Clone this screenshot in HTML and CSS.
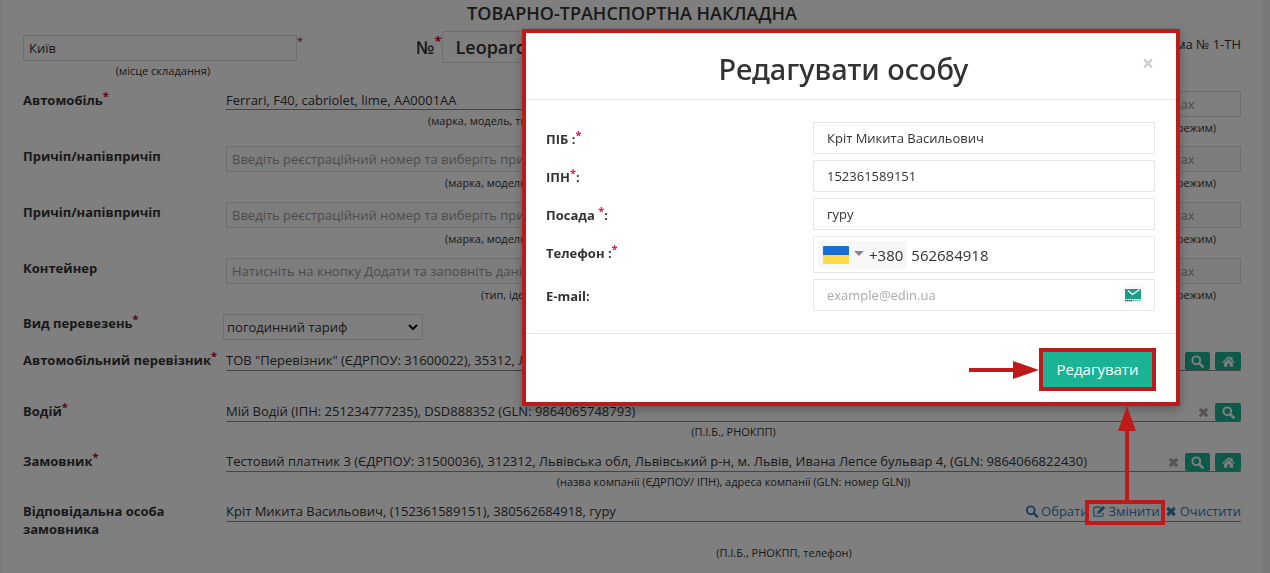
FILE: index.html
```html
<!DOCTYPE html>
<html lang="uk">
<head>
<meta charset="utf-8">
<title>Товарно-транспортна накладна</title>
<link rel="stylesheet" href="styles.css">
</head>
<body>
<svg class="sprite" aria-hidden="true">
  <symbol id="search" viewBox="0 0 16 16"><circle cx="6.5" cy="6.5" r="4.8" fill="none" stroke="currentColor" stroke-width="2.4"/><path d="M10.2 10.2l4.2 4.2" stroke="currentColor" stroke-width="3" stroke-linecap="round"/></symbol>
  <symbol id="home" viewBox="0 0 16 16"><path d="M8 1.6l2.8 2.5V2.4h2.2v3.7L16 8.8l-1 1.1L8 3.9 1 9.900 0 8.800z" fill="currentColor"/><path d="M8 5l5.500 4.700V14.500H9.500v-4h-3v4h-4V9.700z" fill="currentColor"/></symbol>
  <symbol id="times" viewBox="0 0 16 16"><path d="M3.500 3.500l9 9M12.500 3.500l-9 9" stroke="currentColor" stroke-width="4"/></symbol>
  <symbol id="edit" viewBox="0 0 16 16"><path d="M10.500 2.600H3.600A2 2 0 0 0 1.600 4.600v7.300a2 2 0 0 0 2 2h7.400a2 2 0 0 0 2-2V9.500" fill="none" stroke="currentColor" stroke-width="1.300"/><path d="M6 8.200l7-7 2.600 2.600-7 7H6z" fill="currentColor"/><path d="M7.200 8.600l1.100 1.100" stroke="#fff" stroke-width="1"/></symbol>
</svg>

<main class="page">
  <h1 class="title">ТОВАРНО-ТРАНСПОРТНА НАКЛАДНА</h1>

  <div class="head">
    <div class="place">
      <div class="place-line"><input class="input" id="city" value="Київ"><sup class="req thin">*</sup></div>
      <label class="hint" for="city">(місце складання)</label>
    </div>
    <div class="number"><label for="num">№<sup class="req">*</sup></label><input class="input big" id="num" value="Leopard"></div>
    <div class="form-name">Форма № 1-ТН</div>
  </div>

  <div class="row first">
    <div class="label">Автомобіль<sup class="req">*</sup></div>
    <div class="main">
      <div class="value">Ferrari, F40, cabriolet, lime, AA0001AA</div>
      <div class="hint hint-car">(марка, модель, тип, реєстраційний номер)</div>
    </div>
    <div class="side"><input class="input" aria-label="Режим" placeholder="Температура у градусах"><div class="hint">(температурний режим)</div></div>
  </div>
  <div class="row boxed">
    <label class="label" for="trailer1">Причіп/напівпричіп</label>
    <div class="main">
      <input class="input off" id="trailer1" placeholder="Введіть реєстраційний номер та виберіть причіп">
      <div class="hint hint-trailer">(марка, модель, тип, номер)</div>
    </div>
    <div class="side"><input class="input off" aria-label="Режим" placeholder="Температура у градусах"><div class="hint">(температурний режим)</div></div>
  </div>
  <div class="row boxed">
    <label class="label" for="trailer2">Причіп/напівпричіп</label>
    <div class="main">
      <input class="input off" id="trailer2" placeholder="Введіть реєстраційний номер та виберіть причіп">
      <div class="hint hint-trailer">(марка, модель, тип, номер)</div>
    </div>
    <div class="side"><input class="input off" aria-label="Режим" placeholder="Температура у градусах"><div class="hint">(температурний режим)</div></div>
  </div>
  <div class="row boxed">
    <label class="label" for="box">Контейнер</label>
    <div class="main">
      <input class="input off" id="box" placeholder="Натисніть на кнопку Додати та заповніть дані">
      <div class="hint hint-box">(тип, ідентифікаційний номер)</div>
    </div>
    <div class="side"><input class="input off" aria-label="Режим" placeholder="Температура у градусах"><div class="hint">(температурний режим)</div></div>
  </div>
  <div class="row short">
    <label class="label" for="kind">Вид перевезень<sup class="req">*</sup></label>
    <div class="select-box">
      <select class="select" id="kind"><option>погодинний тариф</option></select>
      <svg class="caret" viewBox="0 0 12 8"><path d="M2 2l4 4 4-4" fill="none" stroke="#111" stroke-width="2"/></svg>
    </div>
  </div>
  <div class="row mid">
    <div class="label">Автомобільний перевізник<sup class="req">*</sup></div>
    <div class="wide">
      <div class="value"><span>ТОВ "Перевізник" (ЄДРПОУ: 31600022), 35312, Львівська обл</span>
        <div class="tools"><button class="btn" aria-label="Пошук"><svg><use href="#search"/></svg></button><button class="btn" aria-label="Адреса"><svg><use href="#home"/></svg></button></div></div>
    </div>
  </div>
  <div class="row mid">
    <div class="label">Водій<sup class="req">*</sup></div>
    <div class="wide">
      <div class="value"><span>Мій Водій (ІПН: 251234777235), DSD888352 (GLN: 9864065748793)</span>
        <div class="tools"><button class="clear" aria-label="Очистити"><svg><use href="#times"/></svg></button><button class="btn" aria-label="Пошук"><svg><use href="#search"/></svg></button></div></div>
      <div class="hint">(П.І.Б., РНОКПП)</div>
    </div>
  </div>
  <div class="row mid">
    <div class="label">Замовник<sup class="req">*</sup></div>
    <div class="wide">
      <div class="value"><span>Тестовий платник 3 (ЄДРПОУ: 31500036), 312312, Львівська обл, Львівський р-н, м. Львів, Ивана Лепсе бульвар 4, (GLN: 9864066822430)</span>
        <div class="tools"><button class="clear" aria-label="Очистити"><svg><use href="#times"/></svg></button><button class="btn" aria-label="Пошук"><svg><use href="#search"/></svg></button><button class="btn" aria-label="Адреса"><svg><use href="#home"/></svg></button></div></div>
      <div class="hint">(назва компанії (ЄДРПОУ/ ІПН), адреса компанії (GLN: номер GLN))</div>
    </div>
  </div>
  <div class="row last">
    <div class="label">Відповідальна особа замовника</div>
    <div class="wide">
      <div class="value"><span>Кріт Микита Васильович, (152361589151), 380562684918, гуру</span>
        <div class="links"><a href="#"><svg><use href="#search"/></svg>Обрати</a><a href="#"><svg><use href="#edit"/></svg>Змінити</a><a href="#"><svg><use href="#times"/></svg>Очистити</a></div></div>
      <div class="hint">(П.І.Б., РНОКПП, телефон)</div>
    </div>
  </div>
</main>

<div class="overlay">
  <div class="modal" role="dialog" aria-labelledby="dlg">
    <header class="modal-head">
      <h2 id="dlg">Редагувати особу</h2>
      <button class="close" aria-label="Закрити">×</button>
    </header>
    <form class="modal-body">
      <div class="field"><label for="name">ПІБ :<sup class="req">*</sup></label><input id="name" value="Кріт Микита Васильович"></div>
      <div class="field"><label for="tax">ІПН<sup class="req">*</sup>:</label><input id="tax" value="152361589151"></div>
      <div class="field"><label for="job">Посада <sup class="req">*</sup>:</label><input id="job" value="гуру"></div>
      <div class="field phone-field"><label for="phone">Телефон :<sup class="req">*</sup></label>
        <div class="phone"><button type="button" class="country"><span class="flag"></span><span class="down"></span><span>+380</span></button><input id="phone" type="tel" value="562684918"></div></div>
      <div class="field"><label for="mail">E-mail:</label>
        <div class="mail"><input id="mail" type="email" placeholder="example@edin.ua">
          <svg class="mail-icon" viewBox="0 0 22 22"><rect width="22" height="22" rx="2" fill="#fafafa"/><rect x="3" y="5" width="16" height="10" fill="#1a9c86"/><path d="M6 6.500l4.500 4 7-5" fill="none" stroke="#fff" stroke-width="1.300"/><path d="M3 16.500h8" stroke="#26405a" stroke-width="1.500" stroke-dasharray="1.500 .5"/><path d="M11 16.500h8" stroke="#3fc9a8" stroke-width="1.500" stroke-dasharray="1.500 .5"/></svg></div></div>
    </form>
    <footer class="modal-foot">
      <svg class="arrow-right" viewBox="0 0 70 18"><path d="M0 7h44V0l26 9-26 9v-7H0z" fill="#bf1a1a"/></svg>
      <button class="save">Редагувати</button>
    </footer>
  </div>
  <div class="callout">
    <svg class="arrow-up" viewBox="0 0 18 94"><path d="M9 0l9 25h-7v69H7V25H0z" fill="#bf1a1a"/></svg>
    <div class="frame"></div>
  </div>
</div>
</body>
</html>
```

FILE: styles.css
```css
* { box-sizing: border-box; }
body { margin: 0; background: #f3f3f4; color: #333; font: 13px/18px "Open Sans", "Noto Sans", sans-serif; }
input, select, button { font: inherit; color: inherit; }
.sprite { display: none; }
.page { margin: 0 8px 0 1px; padding: 3px 21px 0 22px; background: #fff; min-height: 100vh; }
.title { margin: 0; font-size: 18px; line-height: 20px; font-weight: 600; text-align: center; }
.req { color: #c2002f; font-size: 11px; line-height: 0; vertical-align: 5px; font-weight: 700; }
.thin { font-weight: 400; }
.hint { font-size: 11px; line-height: 18px; text-align: center; }
.input { width: 100%; height: 26px; padding: 0 5px; border: 1px solid #dcdddd; border-radius: 1px; background: transparent; display: block; }
.input::placeholder { color: #999; opacity: 1; }
.off { background: #fafafa; }

.head { display: grid; grid-template-columns: 280px 1fr auto; column-gap: 113px; height: 68px; padding-top: 8px; }
.place { padding-top: 4px; }
.place-line { display: flex; margin-bottom: 1px; }
.place-line .input { width: 275px; }
.place-line .req { align-self: flex-start; padding-top: 6px; }
.place-line + .hint { display: block; }
.number { display: flex; align-items: center; height: 32px; font-size: 18px; font-weight: 600; }
.number label { white-space: nowrap; }
.number .req { vertical-align: 8px; font-size: 13px; }
.big { width: 300px; height: 32px; padding: 0 13px; font-weight: 600; }
.form-name { padding-top: 4px; }

.row { display: grid; grid-template-columns: 197px 1fr 203px; column-gap: 6px; min-height: 56px; align-items: start; }
.first { min-height: 55px; }
.label { font-weight: 700; white-space: nowrap; }
.boxed .label { padding-top: 1px; }
.last .label { white-space: normal; }
.wide { grid-column: 2 / 4; }
.value { display: flex; justify-content: space-between; border-bottom: 1px solid #8a8a8a; height: 19px; margin-bottom: 2px; white-space: nowrap; }
.input + .hint { margin-top: 2px; }
.hint-car, .hint-trailer, .hint-box { text-align: left; padding-left: 202px; }
.hint-trailer { padding-left: 219px; }
.hint-box { padding-left: 255px; }
.side .hint { text-align: right; padding-right: 25px; }
.short { min-height: 37px; }
.mid { min-height: 50px; }
.short + .mid { min-height: 51px; }
.mid .value, .last .value { height: 20px; margin-bottom: 1px; }
.last .value { margin-bottom: 22px; }
.last .hint { padding-left: 101px; }
.select-box { position: relative; width: 200px; margin-left: -3px; }
.select { width: 100%; height: 26px; padding: 0 3px; border: 1px solid #dcdddd; border-radius: 1px; background: transparent; appearance: none; display: block; }
.caret { position: absolute; right: 4px; top: 9px; width: 12px; height: 8px; pointer-events: none; }
.tools { display: flex; gap: 5px; align-items: end; }
.btn { width: 25px; height: 18px; padding: 0; border: 0; border-radius: 2px; background: #1ab394; color: #fff; display: grid; place-items: center; }
.btn svg, .clear svg { width: 13px; height: 13px; display: block; }
.clear { width: 13px; height: 18px; padding: 0; border: 0; background: none; color: #aaa; display: grid; place-items: center; }
.btn:last-child { width: 26px; }
.links { display: flex; align-items: flex-start; gap: 4px; }
.links a { display: flex; align-items: center; gap: 2px; color: #337ab7; text-decoration: none; }
.links svg { width: 14px; height: 13px; }

.overlay { position: fixed; inset: 0; padding: 29px 90px 0 0; background: rgba(0, 0, 0, .5); display: flex; flex-direction: column; align-items: flex-end; }
.modal { width: 658px; flex: none; border: 4px solid #bf1a1a; background: #fff; box-shadow: 0 3px 10px rgba(0, 0, 0, .3); }
.modal-head { display: flex; align-items: center; height: 67px; padding: 0 21px 0 20px; border-bottom: 1px solid #e5e5e5; }
.modal-head h2 { flex: 1; margin: 5px 0 0; font-family: "Noto Sans", "Open Sans", sans-serif; font-size: 29px; line-height: 36px; font-weight: 500; text-align: center; }
.close { margin-bottom: 7px; padding: 0 1px; border: 0; background: none; color: #ccc; font-size: 21px; line-height: 20px; font-weight: 700; }
.modal-body { display: grid; gap: 6px; padding: 22px 21px 22px 20px; border-bottom: 1px solid #e5e5e5; }
.field { display: grid; grid-template-columns: 1fr 342px; align-items: center; }
.field label { font-weight: 700; padding-top: 2px; }
.phone-field label { padding: 0 0 4px; }
.modal-body .req { color: #ed1642; }
.field input { width: 100%; height: 32px; padding: 0 13px; border: 1px solid #e5e6e7; border-radius: 1px; background: #fff; }
.field input::placeholder { color: #aaa; opacity: 1; }
.phone { display: flex; align-items: center; height: 37px; padding: 0 4px; border: 1px solid #e5e6e7; border-radius: 1px; font-size: 15px; }
.phone .country + input { border: 0; height: 28px; padding: 0 4px; min-width: 0; }
.country { display: flex; align-items: center; gap: 5px; height: 28px; padding: 0 4px 0 5px; border: 0; border-radius: 3px; background: #f7f7f7; }
.flag { width: 26px; height: 18px; background: linear-gradient(#176dd2 50%, #ffd94a 50%); border-radius: 1px; }
.down { border: 5px solid transparent; border-top: 5px solid #888; border-bottom: 0; margin-bottom: 3px; }
.mail { position: relative; }
.mail-icon { position: absolute; right: 11px; top: 5px; width: 22px; height: 22px; }
.modal-foot { display: flex; justify-content: flex-end; align-items: center; gap: 0; padding: 14px 20px 11px; }
.arrow-right { width: 70px; height: 18px; }
.save { width: 117px; height: 43px; padding: 0 0 2px; border: 4px solid #bf1a1a; background: #1ab394; color: #fff; font-size: 15px; }
.callout { display: flex; flex-direction: column; align-items: center; width: 80px; margin-right: 15px; }
.arrow-up { width: 18px; height: 94px; display: block; margin-right: -4px; }
.frame { width: 80px; height: 25px; border: 4px solid #bf1a1a; }
```
